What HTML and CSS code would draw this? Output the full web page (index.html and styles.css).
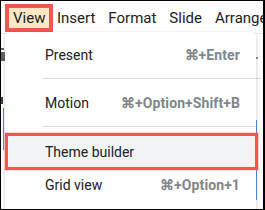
FILE: index.html
```html
<!DOCTYPE html>
<html>
<head>
<meta charset="utf-8">
<link rel="stylesheet" href="styles.css">
</head>
<body>
<div class="frame">
  <div class="topbar">
    <nav class="menubar">
      <span class="mb-item active">View</span>
      <span class="mb-item">Insert</span>
      <span class="mb-item">Format</span>
      <span class="mb-item">Slide</span>
      <span class="mb-item">Arrange</span>
    </nav>
  </div>
  <div class="app">
    <div class="side left">
      <span class="ico-a"></span>
      <span class="ico-b"></span>
      <span class="frag"></span>
      <span class="blue-l"></span>
    </div>
    <div class="side right">
      <span class="dot"></span>
      <span class="rmark"></span>
      <span class="blue-r"></span>
    </div>
  </div>
  <div class="menu">
    <div class="row"><span class="label">Present</span><span class="key">⌘+Enter</span></div>
    <div class="sep"></div>
    <div class="row"><span class="label">Motion</span><span class="key">⌘+Option+Shift+B</span></div>
    <div class="sep"></div>
    <div class="row hl"><span class="label">Theme builder</span></div>
    <div class="row"><span class="label">Grid view</span><span class="key">⌘+Option+1</span></div>
  </div>
</div>
</body>
</html>
```

FILE: styles.css
```css
html, body {
  margin: 0;
  padding: 0;
  background: #fff;
}
.frame {
  position: relative;
  width: 265px;
  height: 210px;
  box-sizing: border-box;
  border: 1px solid #000;
  border-width: 1px 2px 1px 1px;
  overflow: hidden;
  background: #fff;
  font-family: Roboto, "Liberation Sans", Arial, sans-serif;
}
.topbar {
  height: 33px;
  border-bottom: 1px solid #e3e5e8;
  box-sizing: border-box;
}
.menubar {
  display: flex;
  align-items: center;
  height: 28px;
  padding: 3px 0 0 4px;
}
.mb-item {
  font-size: 15px;
  color: #202124;
  padding: 0 6.5px;
  line-height: 20px;
  height: 20px;
  white-space: nowrap;
}
.mb-item.active {
  border: 4px solid #f4554f;
  background: #fde8c5;
  padding: 0 4px;
  margin-right: -3px;
}
.app {
  position: relative;
  height: 175px;
}
.side {
  position: absolute;
  top: 0;
  bottom: 0;
  width: 8px;
}
.side.left { left: 0; }
.side.right { right: 0; }
.ico-a, .ico-b, .dot, .blue-l, .blue-r, .frag, .rmark {
  position: absolute;
}
.ico-a {
  left: 0; top: 14px; width: 3px; height: 2px; background: #5f6368;
}
.ico-b {
  left: 0; top: 18px; width: 4px; height: 9px; background: #5f6368;
}
.frag {
  left: 0; top: 63px; width: 2px; height: 7px; background: #3c4043;
}
.blue-l {
  left: 2px; top: 74px; width: 1px; height: 42px; background: #4a8cf0;
}
.dot {
  left: 1px; top: 23px; width: 2px; height: 2px; background: #5f6368; border-radius: 1px;
}
.rmark {
  left: 0; top: 44px; width: 6px; height: 1px; background: #dadce0;
}
.blue-r {
  left: 1px; top: 86px; width: 1px; height: 80px; background: #4a8cf0;
}
.menu {
  position: absolute;
  left: 4px;
  top: 31px;
  width: 251px;
  height: 200px;
  background: #fff;
  border-radius: 4px;
  box-shadow: 0 2px 5px rgba(60, 64, 67, 0.22), 0 0 1px rgba(60, 64, 67, 0.2);
  padding-top: 8px;
  box-sizing: border-box;
}
.row {
  display: flex;
  align-items: center;
  justify-content: space-between;
  height: 30px;
  padding: 0 16px 0 40px;
  box-sizing: border-box;
}
.label {
  font-size: 14px;
  color: #202124;
}
.key {
  font-size: 14px;
  font-weight: 700;
  letter-spacing: 0.1px;
  color: #80868b;
}
.sep {
  height: 1px;
  background: #dadce0;
  margin: 8px 0 9px 37px;
}
.row.hl {
  height: 37px;
  margin-top: -3px;
  margin-right: -2px;
  border: 3px solid #f4554f;
  background: #f1f3f4;
  padding-left: 37px;
  box-shadow: 0 0 0 0.6px rgba(245, 83, 78, 0.35);
}
```
